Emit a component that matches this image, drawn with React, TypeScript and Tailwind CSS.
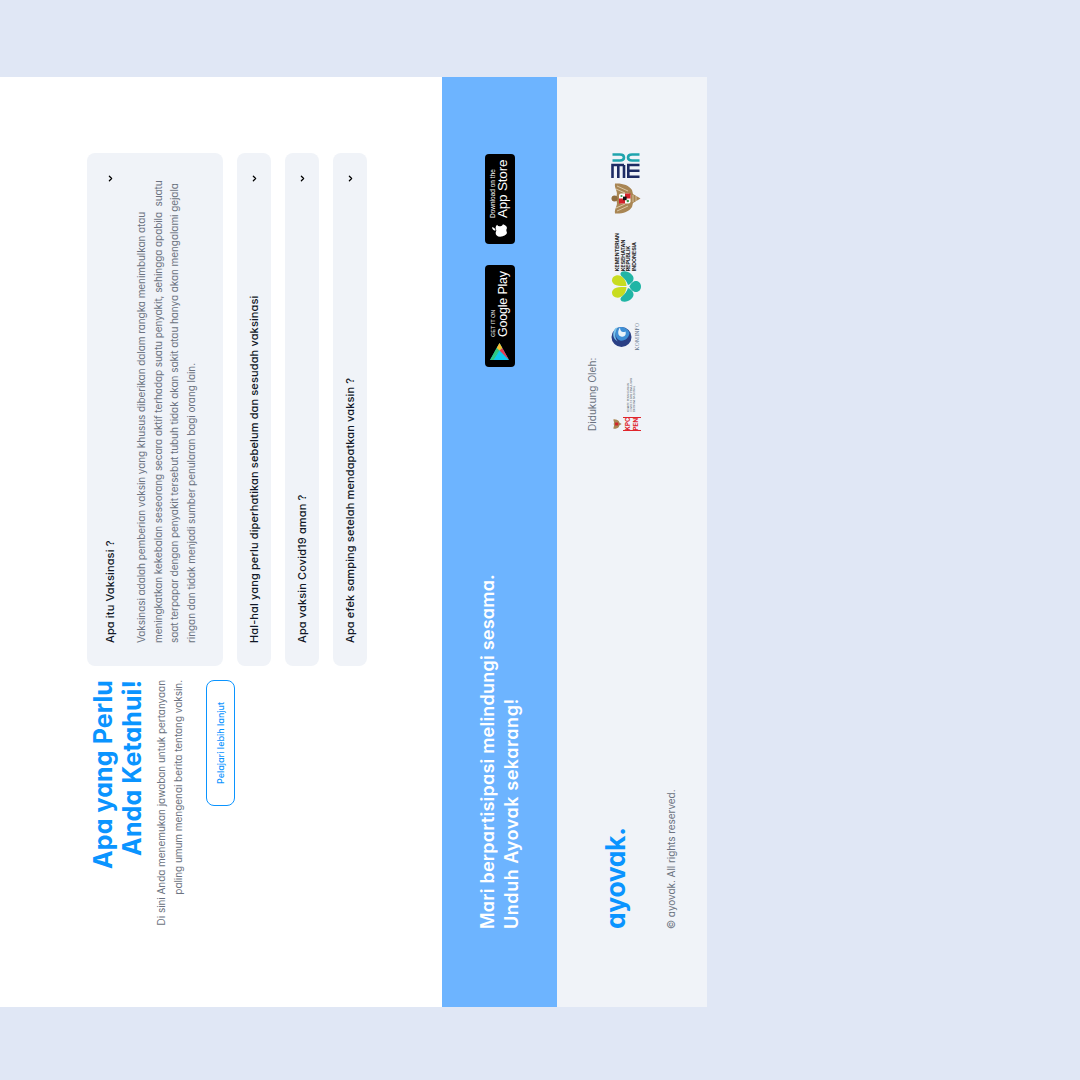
import React from "react";
import { ChevronDown } from "lucide-react";
import { FaApple } from "react-icons/fa";

const font = "[font-family:Inter,'Liberation_Sans',sans-serif] [font-feature-settings:'cv11']";

function Faq({ title }: { title: string }) {
  return (
    <div className="flex h-[34px] items-center justify-between rounded-lg bg-[#f0f3f8] pl-[23px] pr-[21px]">
      <span className="text-[11px] font-medium tracking-[0.13px] text-[#111827]">{title}</span>
      <ChevronDown size={9} strokeWidth={3.4} className="text-black" />
    </div>
  );
}

function Garuda() {
  return (
    <svg width="31" height="30" viewBox="0 0 31 30">
      <path d="M14 5 C9 8 6 3 0.500 4 C0 11 2 18 7 21 L11 22 L15.500 29.500 L20 22 L24 21 C29 18 31 11 30.500 4 C25 3 22 8 17 5 Z" fill="#a98654" />
      <path d="M3 6 L8 17 M6 5 L10 14 M28 6 L23 17 M25 5 L21 14" stroke="#e6d8bd" strokeWidth="0.800" />
      <path d="M12 22 L19 22 M13 25 L18 25" stroke="#e6d8bd" strokeWidth="0.700" />
      <circle cx="15.500" cy="3.500" r="3" fill="#8f6d3f" />
      <rect x="10.500" y="8" width="10" height="11.500" rx="2" fill="#fff" />
      <rect x="10.500" y="8" width="5" height="6" fill="#d2232a" />
      <rect x="15.500" y="14" width="5" height="5.500" fill="#d2232a" />
      <rect x="13.800" y="12" width="3.600" height="3.600" fill="#111" />
      <circle cx="13" cy="16.800" r="1.200" fill="#3c9a4d" />
      <circle cx="18" cy="10.500" r="1.100" fill="#3c9a4d" />
    </svg>
  );
}

function Kemkes() {
  return (
    <svg width="31" height="30" viewBox="0 0 31 30">
      <path d="M15 15.500 C8 15 3.500 10.500 4.500 5 C5.500 0.500 11 -0.500 13.500 3.500 C15 6.500 15.300 11 15 15.500 Z" fill="#c8dc20" />
      <path d="M16 15.500 C23 15 27.500 10.500 26.500 5 C25.500 0.500 20 -0.500 17.500 3.500 C16 6.500 15.700 11 16 15.500 Z" fill="#c8dc20" />
      <path d="M0.300 14 C0 9 3.500 8.500 5.500 11 C8 14 11 16 14 17 C12 22 7.500 24 4.500 21.500 C2 19.500 0.500 17 0.300 14 Z" fill="#21b5a5" />
      <path d="M30.700 14 C31 9 27.500 8.500 25.500 11 C23 14 20 16 17 17 C19 22 23.500 24 26.500 21.500 C29 19.500 30.500 17 30.700 14 Z" fill="#21b5a5" />
      <path d="M15.500 18.500 C18.500 19.500 21 22 21 25 C21 28 18.500 30 15.500 30 C12.500 30 10 28 10 25 C10 22 12.500 19.500 15.500 18.500 Z" fill="#21b5a5" />
    </svg>
  );
}

function Kominfo() {
  return (
    <svg width="20" height="21" viewBox="0 0 20 21">
      <circle cx="10" cy="10.500" r="10" fill="#2a3f85" />
      <path d="M20 8 C15 2.500 8.500 4 6.500 9 C5.500 13.500 9 18 14 18.500 C18.500 17 20.500 12 20 8 Z" fill="#3f8fd6" />
      <path d="M19 4.500 C14 0.500 7.500 2 5.500 7 C8 4 14 3 19.500 7 Z" fill="#79c3ec" />
      <path d="M10.500 10 C11.500 6.500 16 6.500 19.500 9 C16 9 14 11 15.500 14.500 C12 15.500 9.500 13.500 10.500 10 Z" fill="#eaf4fb" />
    </svg>
  );
}

function Bumn() {
  return (
    <svg width="25" height="30" viewBox="0 0 25 30">
      <g transform="translate(25 0) rotate(90)">
        <path d="M1.500 1.500 H9 Q13 1.500 13 4.500 Q13 7.500 9 7.500 H1.500" fill="none" stroke="#1fa4ad" strokeWidth="2.600" />
        <path d="M28.500 1.500 H21 Q17 1.500 17 4.500 Q17 7.500 21 7.500 H28.500" fill="none" stroke="#1fa4ad" strokeWidth="2.600" />
        <path d="M1.500 25 V12 H13 M7.300 12 V25 M13 12 V25" fill="none" stroke="#1d2b63" strokeWidth="2.600" />
        <path d="M28.500 12 H17.300 V23.700 H28.500 M17.300 17.800 H28.500" fill="none" stroke="#1d2b63" strokeWidth="2.600" />
      </g>
    </svg>
  );
}

function Play() {
  return (
    <svg width="17" height="19" viewBox="0 0 17 19" className="shrink-0">
      <path d="M0 0 L17 9.500 L0 19 Z" fill="#10c8ee" />
      <path d="M0 0 L12 6.700 L9.500 9.500 Z" fill="#31c77a" />
      <path d="M0 0 L9.500 9.500 L0 3.500 Z" fill="#31c77a" />
      <path d="M0 19 L12 12.300 L9.500 9.500 Z" fill="#e8384f" />
      <path d="M12 6.700 L17 9.500 L12 12.300 L9.500 9.500 Z" fill="#fbc02d" />
    </svg>
  );
}

export default function App() {
  return (
    <div className={`h-[1080px] w-[1080px] overflow-hidden bg-[#e0e7f5] pt-[77px] ${font}`}>
      <div className="h-[707px] w-[930px] origin-top-left -rotate-90 translate-y-[930px]">
        <section className="flex h-[442px] gap-[14px] bg-white pl-[78px] pt-[87px]">
          <div className="flex w-[249px] flex-col items-end text-right">
            <h2 className="mt-[2px] text-[25px] font-bold leading-[29px] tracking-[0.1px] text-[#0a94ff]">
              <span className="block">Apa yang Perlu</span>
              <span className="block">Anda Ketahui!</span>
            </h2>
            <p className="mt-[6px] whitespace-nowrap text-[10px] leading-[17px] tracking-[-0.05px] text-[#6b7280]">
              Di sini Anda menemukan jawaban untuk pertanyaan
              <br />
              paling umum mengenai berita tentang vaksin.
            </p>
            <button className="mt-[19px] flex h-[29px] w-[126px] items-center justify-center rounded-lg border border-[#0a94ff] bg-white text-[9px] font-medium text-[#0a94ff]">
              Pelajari lebih lanjut
            </button>
          </div>
          <div className="flex w-[513px] flex-col gap-[14px]">
            <div className="h-[136px] rounded-lg bg-[#f0f3f8] pl-[23px] pr-[21px] pt-[18px]">
              <div className="flex h-[10px] items-center justify-between">
                <span className="text-[11px] font-medium tracking-[0.13px] text-[#111827]">Apa itu Vaksinasi ?</span>
                <ChevronDown size={9} strokeWidth={3.4} className="text-black" />
              </div>
              <p className="mt-[18px] whitespace-nowrap text-[10px] leading-[16.500px] tracking-[-0.07px] text-[#6b7280]">
                Vaksinasi adalah pemberian vaksin yang khusus diberikan dalam rangka menimbulkan atau
                <br />
                meningkatkan kekebalan seseorang secara aktif terhadap suatu penyakit, sehingga apabila&nbsp; suatu
                <br />
                saat terpapar dengan penyakit tersebut tubuh tidak akan sakit atau hanya akan mengalami gejala
                <br />
                ringan dan tidak menjadi sumber penularan bagi orang lain.
              </p>
            </div>
            <Faq title="Hal-hal yang perlu diperhatikan sebelum dan sesudah vaksinasi" />
            <Faq title="Apa vaksin Covid19 aman ?" />
            <Faq title="Apa efek samping setelah mendapatkan vaksin ?" />
          </div>
        </section>

        <section className="flex h-[115px] items-center justify-between bg-[#6db4ff] pl-[78px] pr-[77px]">
          <h3 className="text-[18px] font-semibold leading-[24px] tracking-[0.22px] text-white">
            Mari berpartisipasi melindungi sesama.
            <br />
            <span className="tracking-[0.55px]">Unduh Ayovak sekarang!</span>
          </h3>
          <div className="flex gap-[21px]">
            <div className="flex h-[30px] w-[102px] items-center rounded-[4px] bg-black pl-[7px] text-white">
              <Play />
              <div className="ml-[6px] flex flex-col whitespace-nowrap font-['Liberation_Sans',sans-serif]">
                <span className="text-[5.500px] leading-[6px]">GET IT ON</span>
                <span className="text-[12.500px] leading-[14px] tracking-[-0.2px]">Google Play</span>
              </div>
            </div>
            <div className="flex h-[30px] w-[90px] items-center rounded-[4px] bg-black pl-[5px] text-white">
              <FaApple size={17} className="shrink-0" />
              <div className="ml-[4px] flex flex-col whitespace-nowrap font-['Liberation_Sans',sans-serif]">
                <span className="text-[6.500px] leading-[7px]">Download on the</span>
                <span className="text-[13.500px] leading-[14px] tracking-[-0.2px]">App Store</span>
              </div>
            </div>
          </div>
        </section>

        <section className="flex h-[150px] justify-between bg-[#f0f3f8] pl-[78px] pr-[76px]">
          <div className="flex flex-col">
            <div className="mt-[43px] text-[26.500px] font-bold leading-[30px] tracking-[-0.4px] text-[#0a94ff]">ayovak.</div>
            <div className="mt-[34px] text-[10px] leading-[14px] tracking-[-0.05px] text-[#6b7280]">© ayovak. All rights reserved.</div>
          </div>
          <div className="w-[278px] pt-[29px]">
            <div className="text-[10px] leading-[13px] tracking-[0.05px] text-[#6b7280]">Didukung Oleh:</div>
            <div className="mt-[12px] flex h-[30px] items-start">
              <div className="flex h-[30px] w-[58px] items-start">
                <div className="flex w-[14px] flex-col items-center">
                  <svg width="10" height="10" viewBox="0 0 31 30" className="mt-[1px]">
                    <path d="M14 5 C9 8 6 3 0.500 4 C0 11 2 18 7 21 L11 22 L15.500 29.500 L20 22 L24 21 C29 18 31 11 30.500 4 C25 3 22 8 17 5 Z" fill="#a98654" />
                    <rect x="11" y="9" width="9" height="10" fill="#d2232a" />
                  </svg>
                  <div className="mt-[1px] flex h-[18px] w-[14px] items-center justify-center border-x border-[#e0242b] text-[6.500px] font-bold leading-[8px] text-[#e0242b]">
                    <span>
                      KPC
                      <br />
                      PEN
                    </span>
                  </div>
                </div>
                <div className="ml-[5px] mt-[16px] whitespace-nowrap text-[2.600px] leading-[3px] text-[#4b5563]">
                  KOMITE PENANGANAN
                  <br />
                  COVID-19 DAN PEMULIHAN
                  <br />
                  EKONOMI NASIONAL
                </div>
              </div>
              <div className="ml-[27px] flex w-[27px] flex-col items-center">
                <Kominfo />
                <span className="mt-[2px] font-['Liberation_Serif',serif] text-[5.500px] leading-[6px] tracking-[0.3px] text-[#64748b]">KOMINFO</span>
              </div>
              <div className="ml-[21px] flex items-center">
                <Kemkes />
                <div className="text-[5.200px] font-bold leading-[5.500px] text-[#222]">
                  KEMENTERIAN
                  <br />
                  KESEHATAN
                  <br />
                  REPUBLIK
                  <br />
                  INDONESIA
                </div>
              </div>
              <div className="ml-[19px] flex items-center gap-[5px]">
                <Garuda />
                <Bumn />
              </div>
            </div>
          </div>
        </section>
      </div>
    </div>
  );
}
